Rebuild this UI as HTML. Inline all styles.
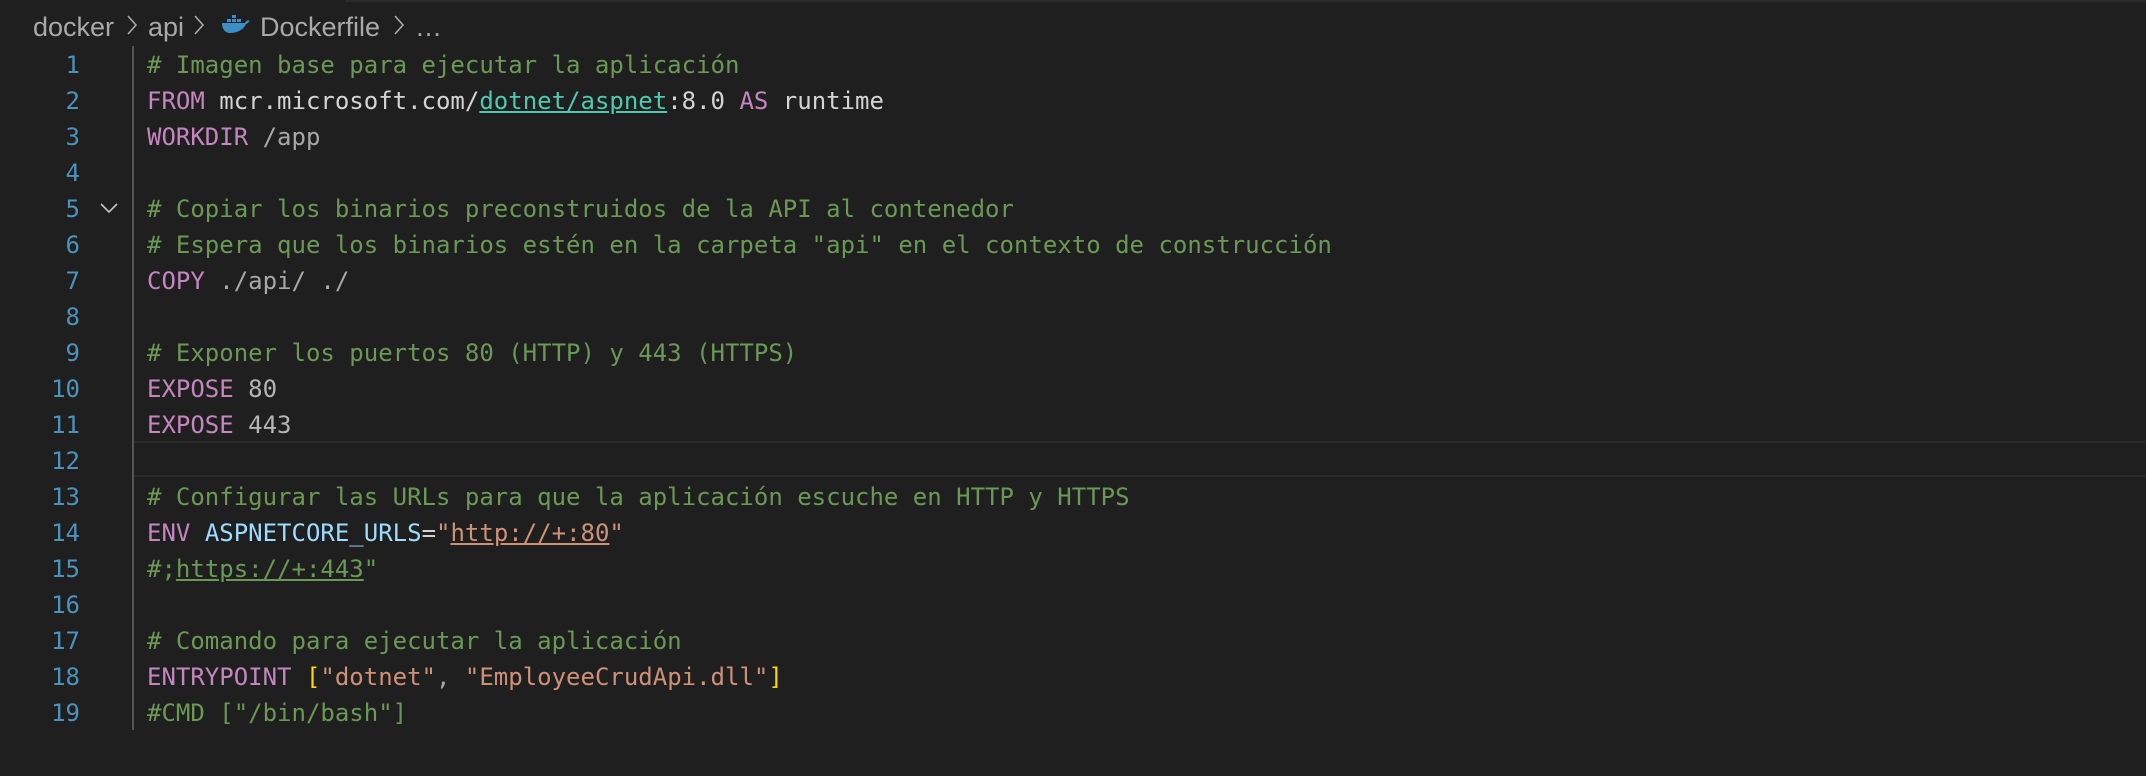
<!DOCTYPE html>
<html><head><meta charset="utf-8"><style>
html,body{margin:0;padding:0;background:#1f1f1f;width:2146px;height:776px;overflow:hidden}
.bc{position:absolute;top:10px;left:33px;font:27px "Liberation Sans",sans-serif;color:#a9a9a9;white-space:nowrap;height:34px;line-height:34px}
.bc span{position:absolute;top:0}
.chev{position:absolute;top:13px}
.gut{position:absolute;left:132px;top:46px;width:2px;height:684px;background:#555}
.cur{position:absolute;left:134px;top:441px;width:2012px;height:32px;border-top:2px solid #2a2a2a;border-bottom:2px solid #2a2a2a}
.ln{position:absolute;left:0;width:80px;text-align:right;font:24px "DejaVu Sans Mono",monospace;color:#4b93bd;height:36px;line-height:36px}
.cl{position:absolute;left:147px;font:24px "DejaVu Sans Mono",monospace;color:#d4d4d4;white-space:pre;height:36px;line-height:36px}
.c{color:#6a9955}.k{color:#c586c0}.t{color:#4ec9b0;text-decoration:underline}.s{color:#ce9178}.g{color:#a8a8a8}.v{color:#9cdcfe}.y{color:#ffd700}.n{color:#b5b5b5}
.u{text-decoration:underline}
</style></head><body>
<div style="position:absolute;left:345px;top:0;width:1801px;height:2px;background:#2b2b2b"></div>
<div class="bc">
<span style="left:0">docker</span>
<span style="left:115px">api</span>
<span style="left:227px">Dockerfile</span>
<span style="left:382px">…</span>
</div>
<svg class="chev" style="left:126px" width="12" height="24" viewBox="0 0 12 24"><path d="M2 3 L10 12 L2 21" fill="none" stroke="#a9a9a9" stroke-width="1.6"/></svg>
<svg class="chev" style="left:193px" width="12" height="24" viewBox="0 0 12 24"><path d="M2 3 L10 12 L2 21" fill="none" stroke="#a9a9a9" stroke-width="1.6"/></svg>
<svg class="chev" style="left:393px" width="12" height="24" viewBox="0 0 12 24"><path d="M2 3 L10 12 L2 21" fill="none" stroke="#a9a9a9" stroke-width="1.6"/></svg>
<svg style="position:absolute;left:221px;top:14px" width="29" height="20" viewBox="0 0 29 20">
<rect x="6" y="5" width="4" height="3" fill="#3c8fc6"/><rect x="11" y="5" width="4" height="3" fill="#3c8fc6"/><rect x="16" y="5" width="4" height="3" fill="#3c8fc6"/><rect x="11" y="1" width="4" height="3" fill="#3c8fc6"/>
<path d="M1 9 H24 C25 6 28 6 28.5 7 C27 9 26 10 25 10 C22 17 14 19 9 19 C4 19 1 15 1 9 Z" fill="#3c8fc6"/>
</svg>
<div class="gut"></div>
<div class="cur"></div>
<svg style="position:absolute;left:100px;top:202px" width="18" height="12" viewBox="0 0 18 12"><path d="M1 2 L9 10 L17 2" fill="none" stroke="#c5c5c5" stroke-width="1.6"/></svg>
<div style="position:absolute;left:0;top:2px">
<div class="ln" style="top:45px">1</div><div class="cl c" style="top:45px"># Imagen base para ejecutar la aplicación</div>
<div class="ln" style="top:81px">2</div><div class="cl" style="top:81px"><span class="k">FROM</span> mcr.microsoft.com/<span class="t">dotnet/aspnet</span>:8.0 <span class="k">AS</span> runtime</div>
<div class="ln" style="top:117px">3</div><div class="cl" style="top:117px"><span class="k">WORKDIR</span> <span class="g">/app</span></div>
<div class="ln" style="top:153px">4</div>
<div class="ln" style="top:189px">5</div><div class="cl c" style="top:189px"># Copiar los binarios preconstruidos de la API al contenedor</div>
<div class="ln" style="top:225px">6</div><div class="cl c" style="top:225px"># Espera que los binarios estén en la carpeta "api" en el contexto de construcción</div>
<div class="ln" style="top:261px">7</div><div class="cl" style="top:261px"><span class="k">COPY</span> <span class="g">./api/ ./</span></div>
<div class="ln" style="top:297px">8</div>
<div class="ln" style="top:333px">9</div><div class="cl c" style="top:333px"># Exponer los puertos 80 (HTTP) y 443 (HTTPS)</div>
<div class="ln" style="top:369px">10</div><div class="cl" style="top:369px"><span class="k">EXPOSE</span> <span class="n">80</span></div>
<div class="ln" style="top:405px">11</div><div class="cl" style="top:405px"><span class="k">EXPOSE</span> <span class="n">443</span></div>
<div class="ln" style="top:441px">12</div>
<div class="ln" style="top:477px">13</div><div class="cl c" style="top:477px"># Configurar las URLs para que la aplicación escuche en HTTP y HTTPS</div>
<div class="ln" style="top:513px">14</div><div class="cl" style="top:513px"><span class="k">ENV</span> <span class="v">ASPNETCORE_URLS</span>=<span class="s">"<span class="u">http://+:80</span>"</span></div>
<div class="ln" style="top:549px">15</div><div class="cl c" style="top:549px">#;<span class="u">https://+:443</span>"</div>
<div class="ln" style="top:585px">16</div>
<div class="ln" style="top:621px">17</div><div class="cl c" style="top:621px"># Comando para ejecutar la aplicación</div>
<div class="ln" style="top:657px">18</div><div class="cl" style="top:657px"><span class="k">ENTRYPOINT</span> <span class="y">[</span><span class="s">"dotnet"</span><span class="g">,</span> <span class="s">"EmployeeCrudApi.dll"</span><span class="y">]</span></div>
<div class="ln" style="top:693px">19</div><div class="cl c" style="top:693px">#CMD ["/bin/bash"]</div>
</div>
</body></html>
